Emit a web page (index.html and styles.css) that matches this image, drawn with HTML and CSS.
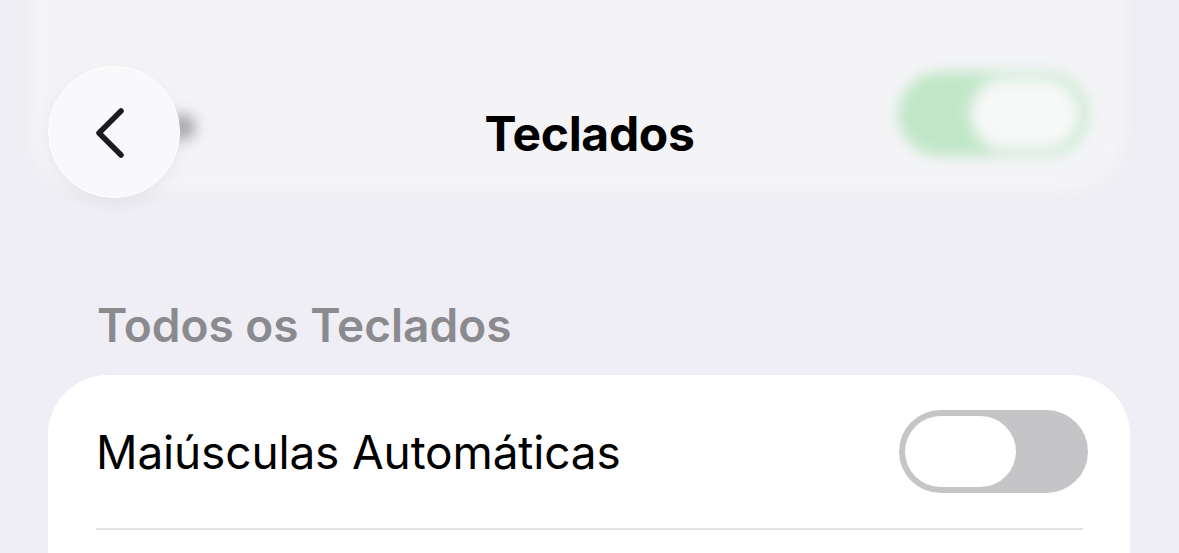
FILE: index.html
```html
<!DOCTYPE html>
<html lang="pt">
<head>
    <meta charset="UTF-8">
    <title>Teclados</title>
    <link rel="stylesheet" href="styles.css">
</head>
<body class="body">
<div class="screen">
    <!-- content scrolled under the navigation bar -->
    <div class="under">
        <div class="under-card">
            <span class="under-dot"></span>
            <span class="under-switch"><span class="under-knob"></span></span>
        </div>
    </div>

    <header class="nav">
        <button class="back">
            <svg width="40" height="60" viewBox="0 0 40 60">
                <path d="M30 9 L8 31 L30 53" fill="none" stroke="#1c1c1e" stroke-width="5.5" stroke-linecap="round" stroke-linejoin="round"/>
            </svg>
        </button>
        <h1 class="title">Teclados</h1>
        <div></div>
    </header>

    <main class="content">
        <h2 class="section-title">Todos os Teclados</h2>
        <div class="group">
            <div class="row">
                <span class="label">Maiúsculas Automáticas</span>
                <span class="switch"><span class="knob"></span></span>
            </div>
            <div class="sep"></div>
        </div>
    </main>
</div>
</body>
</html>
```

FILE: styles.css
```css
.body{
    margin:0;
    background:#efeef4;
    font-family:Inter, "Noto Sans", sans-serif;
    color:#000;
}
.screen{
    position:relative;
    width:1179px;
    height:553px;
    overflow:hidden;
}
.under{
    position:absolute;
    left:0;
    top:0;
    right:0;
    height:260px;
    filter:blur(7px);
}
.under-card{
    position:absolute;
    left:30px;
    right:54px;
    top:-80px;
    height:272px;
    border-radius:60px;
    background:#f4f4f7;
}
.under-dot{
    position:absolute;
    left:140px;
    top:194px;
    width:26px;
    height:26px;
    border-radius:50%;
    background:#a9a9b0;
}
.under-switch{
    position:absolute;
    left:868px;
    top:152px;
    width:190px;
    height:84px;
    border-radius:42px;
    background:#c0e6c7;
}
.under-knob{
    position:absolute;
    right:8px;
    top:6px;
    width:110px;
    height:72px;
    border-radius:36px;
    background:#f7f8f8;
}
.nav{
    position:relative;
    display:grid;
    grid-template-columns:1fr auto 1fr;
    align-items:center;
    padding:66px 48px 0;
}
.back{
    width:132px;
    height:132px;
    border-radius:50%;
    border:1.5px solid #ffffff;
    background:#f9f9fb;
    box-shadow:0 6px 18px rgba(0,0,0,0.05);
    display:flex;
    align-items:center;
    justify-content:center;
    padding:0 6px 0 0;
}
.back svg{
    display:block;
}
.title{
    margin:3px 0 0;
    font-size:48px;
    line-height:48px;
    font-weight:700;
    letter-spacing:-0.3px;
}
.content{
    position:relative;
    padding:105px 49px 0 48px;
}
.section-title{
    margin:0 0 28px 49px;
    font-size:46px;
    line-height:44px;
    font-weight:600;
    color:#8a8a8f;
}
.group{
    background:#fff;
    border-radius:60px 60px 0 0;
    padding:0 47px 0 48px;
    height:200px;
}
.row{
    display:flex;
    align-items:center;
    justify-content:space-between;
    height:153px;
}
.label{
    font-size:46px;
    line-height:47px;
    letter-spacing:-0.15px;
    padding-top:2px;
}
.switch{
    position:relative;
    width:189px;
    height:83px;
    border-radius:42px;
    background:#c5c5c8;
    margin-right:-5px;
}
.knob{
    position:absolute;
    left:6px;
    top:6px;
    width:111px;
    height:71px;
    border-radius:36px;
    background:#fff;
}
.sep{
    height:2px;
    background:#e3e3e8;
}
```
